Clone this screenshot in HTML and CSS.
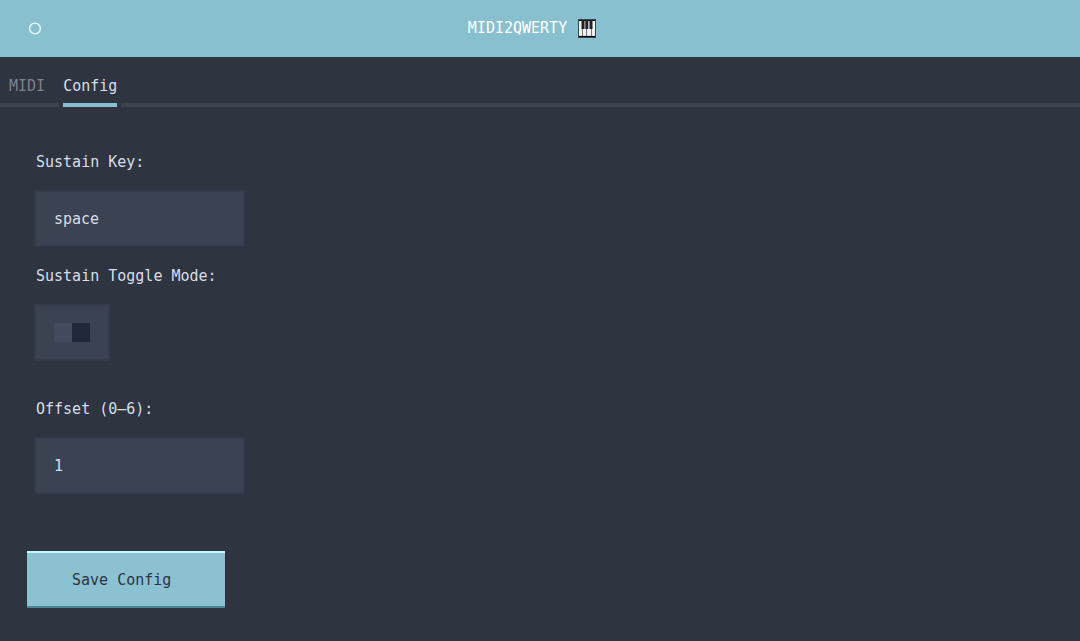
FILE: index.html
```html
<!DOCTYPE html>
<html lang="en">
<head>
<meta charset="utf-8">
<meta name="viewport" content="width=device-width, initial-scale=1">
<title>MIDI2QWERTY</title>
<link rel="stylesheet" href="styles.css">
</head>
<body>
<header class="header">
  <button class="menu" type="button" aria-label="Menu">
    <svg class="menu-icon" viewBox="0 0 14 14" aria-hidden="true"><circle cx="7" cy="6.5" r="5.4" fill="none" stroke="#eef9fb" stroke-width="1.4"/></svg>
  </button>
  <h1 class="title">MIDI2QWERTY
    <svg class="piano" viewBox="0 0 18 19" aria-hidden="true">
      <rect width="18" height="19" fill="#35464d"/>
      <rect x="1" y="1" width="16" height="17" fill="#08090a"/>
      <path fill="#f2f2f2" d="M1 2h3v15H1zM5 2h3v15H5zM9 2h4v15H9zM14 2h3v15h-3z"/>
      <path fill="#d8d8d8" d="M1 16h3v1H1zM5 16h3v1H5zM9 16h4v1H9zM14 16h3v1h-3z"/>
      <path fill="#202224" d="M3.500 1h3v9h-3zM7.300 1h3v9h-3zM11.500 1h3v9h-3z"/>
      <path fill="#777" d="M4 10h1v7H4zM8 10h1v7H8zM13 10h1v7h-1z"/>
    </svg>
  </h1>
</header>
<nav class="tabs" role="tablist">
  <button class="tab tab-first" type="button" role="tab" aria-selected="false">MIDI</button>
  <button class="tab tab-active" type="button" role="tab" aria-selected="true">Config</button>
  <span class="tabs-rest"></span>
</nav>
<main>
  <form class="form">
    <div class="field">
      <label class="label" for="sustain-key">Sustain Key:</label>
      <input class="input" id="sustain-key" type="text" value="space">
    </div>
    <div class="field">
      <label class="label" for="toggle-mode">Sustain Toggle Mode:</label>
      <span class="switch-box"><input class="switch" id="toggle-mode" type="checkbox" role="switch"></span>
    </div>
    <div class="field field-offset">
      <label class="label" for="offset">Offset (0–6):</label>
      <input class="input" id="offset" type="text" inputmode="numeric" value="1">
    </div>
    <button class="save" type="button">Save Config</button>
  </form>
</main>
</body>
</html>
```
FILE: styles.css
```css
* {
  box-sizing: border-box;
}

body {
  margin: 0;
  min-height: 100vh;
  background: #2e3440;
  color: #d8dee9;
  font: 15px/21px "DejaVu Sans Mono", monospace;
}

button,
input {
  margin: 0;
  border: 0;
  border-radius: 0;
  font: inherit;
  color: inherit;
}

.header {
  display: grid;
  grid-template-columns: 72px 1fr 88px;
  align-items: center;
  min-height: 57px;
  background: #88c0d0;
}

.menu {
  display: flex;
  padding: 21px 28px;
  background: none;
}

.menu-icon {
  width: 14px;
  height: 14px;
}

.title {
  display: flex;
  align-items: center;
  justify-content: center;
  gap: 11px;
  margin: 0;
  font-size: 15px;
  font-weight: 400;
  color: #ffffff;
}

.piano {
  width: 18px;
  height: 19px;
}

.tabs {
  display: flex;
  gap: 4px;
  padding-top: 19px;
}

.tab {
  padding: 0 0 6px;
  border-bottom: 4px solid #3d434f;
  background: none;
  color: #7c818b;
}

.tab-first {
  padding-left: 9px;
  padding-right: 14px;
}

.tab-active {
  border-color: #88c0d0;
  color: #d8dee9;
}

.tabs-rest {
  flex: 1;
  border-bottom: 4px solid #3d434f;
}

.form {
  display: flex;
  flex-direction: column;
  align-items: flex-start;
  gap: 19px;
  padding: 45px 27px 33px;
}

.field {
  display: flex;
  flex-direction: column;
  align-items: flex-start;
  gap: 17px;
  padding-left: 7px;
}

.field-offset {
  padding-top: 19px;
  padding-bottom: 38px;
}

.label {
  padding-left: 2px;
}

.input {
  width: 211px;
  height: 57px;
  padding: 0 18px;
  border: 2px solid #353b4a;
  background: #3b4252;
}

.switch-box {
  display: flex;
  padding: 17px 18px;
  border: 2px solid #353b4a;
  background: #3b4252;
}

.switch {
  appearance: none;
  width: 36px;
  height: 19px;
  background: linear-gradient(90deg, #434c5e 50%, #20293a 50%);
}

.switch:checked {
  background: linear-gradient(90deg, #20293a 50%, #88c0d0 50%);
}

.save {
  padding: 17px 54px 15px 45px;
  border-top: 2px solid #c5fbff;
  border-bottom: 2px solid #498593;
  background: #8bc1d1;
  color: #2e3440;
}
```
